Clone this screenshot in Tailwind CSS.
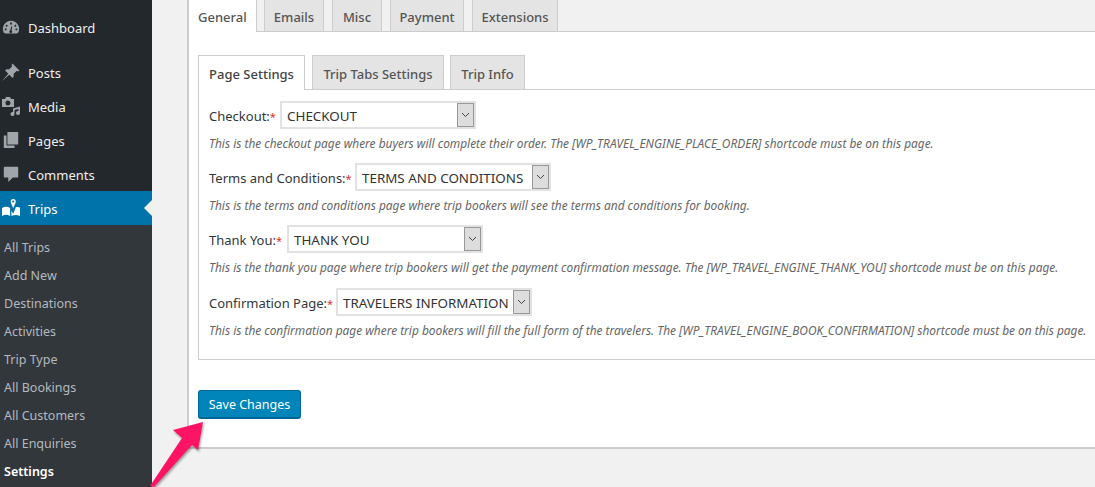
<!DOCTYPE html>
<html lang="en">
<head>
<meta charset="UTF-8">
<title>Settings</title>
<script src="https://cdn.jsdelivr.net/npm/@tailwindcss/browser@4"></script>
</head>
<body class="bg-[#f1f1f1] font-['Noto_Sans',sans-serif] text-[13px] text-[#444] overflow-hidden">
<div class="relative flex w-[1095px] h-[487px] overflow-hidden">
  <!-- Admin menu -->
  <aside class="w-[152px] shrink-0 bg-[#23282d] text-[#eee] text-[13px]">
    <div class="h-[55px] flex items-center gap-[8px] pl-[2px]">
      <svg class="w-[18px] h-[18px] text-[#a0a5aa]" viewBox="0 0 20 20" fill="currentColor"><path d="M10 2a9 9 0 0 0-8.200 12.700c.3.800 1 1.300 1.900 1.300h12.600c.9 0 1.600-.5 1.900-1.300A9 9 0 0 0 10 2zm-1 2h2v2H9zM5 6l1.500 1.500-1.300 1.300L3.800 7.400zm10 0 1.200 1.400-1.400 1.400-1.300-1.300zM3 10.500h2v2H3zm12 0h2v2h-2zm-4.500-2.500.8.300-.6 4.700a1.500 1.500 0 1 1-1.600-.2z"/></svg>
      <span class="pt-[3px]">Dashboard</span>
    </div>
    <ul>
      <li class="h-[34px] flex items-center gap-[7px] pl-[1px]">
        <svg class="w-[20px] h-[20px] text-[#a0a5aa]" viewBox="0 0 20 20" fill="currentColor"><path d="M11.500 1.500 18.500 8.500 17 9.500 15.800 8.800 12.500 12c.5 1.600.2 3-.8 4L8.300 12.700 1 19l6.300-7.300L4 8.300c1-1 2.400-1.300 4-.8l3.200-3.300-.7-1.200z"/></svg>
        <span class="pt-[4px]">Posts</span>
      </li>
      <li class="h-[34px] flex items-center gap-[7px] pl-[1px]">
        <svg class="w-[20px] h-[20px] text-[#a0a5aa]" viewBox="0 0 20 20" fill="currentColor"><path fill-rule="evenodd" d="M1 3h3l1-2h4l1 2h3v8H1zm6 1.500a2.500 2.500 0 1 0 0 5 2.500 2.500 0 0 0 0-5zM12 12.500l7-2V17a2 2 0 1 1-1.500-1.900V13l-4 1.100V18a2 2 0 1 1-1.500-1.900z"/></svg>
        <span class="pt-[4px]">Media</span>
      </li>
      <li class="h-[34px] flex items-center gap-[8px] pl-[2px]">
        <svg class="w-[18px] h-[18px] text-[#a0a5aa]" viewBox="0 0 20 20" fill="currentColor"><path d="M6 1h12v14H6zM2 5h3v11h9v3H2z"/></svg>
        <span class="pt-[4px]">Pages</span>
      </li>
      <li class="h-[34px] flex items-center gap-[8px] pl-[2px]">
        <svg class="w-[18px] h-[18px] text-[#a0a5aa]" viewBox="0 0 20 20" fill="currentColor"><path d="M3 2h14a1 1 0 0 1 1 1v10a1 1 0 0 1-1 1h-5l-5 5v-5H3a1 1 0 0 1-1-1V3a1 1 0 0 1 1-1z"/></svg>
        <span class="pt-[4px]">Comments</span>
      </li>
      <li class="relative h-[34px] flex items-center gap-[8px] pl-[2px] bg-[#0073aa] text-white">
        <svg class="w-[18px] h-[18px]" viewBox="0 0 20 20" fill="currentColor"><path d="M0 10c3-2 6-2 9 0v9c-3-2-6-2-9 0zM15.500 9c1.700-.5 3.200-.2 4.500.5V19c-3-1.500-6-1.500-9.500 0v-6l2 3.500z"/><path fill-rule="evenodd" d="M12.500 0a2.800 2.800 0 0 1 2.800 2.800c0 1.800-2.800 7.200-2.800 7.200S9.700 4.600 9.700 2.800A2.800 2.800 0 0 1 12.500 0zm0 1.600a1.200 1.200 0 1 0 0 2.400 1.200 1.200 0 0 0 0-2.400z"/></svg>
        <span class="pt-[4px]">Trips</span>
        <span class="absolute right-0 top-[9px] border-y-[8px] border-y-transparent border-r-[8px] border-r-[#f1f1f1]"></span>
      </li>
    </ul>
    <ul class="bg-[#32373c] h-[262px] pt-[9px] pl-[4px] text-[12.5px] text-[#b4b9be]">
      <li class="h-[28px] leading-[28px]">All Trips</li>
      <li class="h-[28px] leading-[28px]">Add New</li>
      <li class="h-[28px] leading-[28px]">Destinations</li>
      <li class="h-[28px] leading-[28px]">Activities</li>
      <li class="h-[28px] leading-[28px]">Trip Type</li>
      <li class="h-[28px] leading-[28px]">All Bookings</li>
      <li class="h-[28px] leading-[28px]">All Customers</li>
      <li class="h-[28px] leading-[28px]">All Enquiries</li>
      <li class="h-[28px] leading-[28px] text-white font-semibold">Settings</li>
    </ul>
  </aside>

  <!-- Settings panel -->
  <main class="flex-1 pl-[35px]">
    <div class="bg-white border-l-2 border-b-2 border-[#ccc] h-[449px]">
      <!-- Top tabs -->
      <nav class="flex gap-[8px] h-[32px] border-b border-[#ccc] bg-[#f1f1f1] text-[13px] font-medium text-[#555]">
        <a class="w-[68px] h-[32px] -mr-[1px] bg-white border-r border-[#ccc] pl-[9px] leading-[35px]">General</a>
        <a class="w-[60px] h-[31px] bg-[#e4e4e4] border-x border-[#ccc] text-center leading-[35px]">Emails</a>
        <a class="w-[50px] h-[31px] bg-[#e4e4e4] border-x border-[#ccc] text-center leading-[35px]">Misc</a>
        <a class="w-[74px] h-[31px] bg-[#e4e4e4] border-x border-[#ccc] text-center leading-[35px]">Payment</a>
        <a class="w-[86px] h-[31px] bg-[#e4e4e4] border-x border-[#ccc] text-center leading-[35px]">Extensions</a>
      </nav>

      <div class="pt-[23px] pl-[9px]">
        <!-- Sub tabs -->
        <div class="flex gap-[7px] h-[35px] border-b border-[#ccc] text-[13px] font-medium text-[#555]">
          <a class="w-[107px] h-[35px] bg-white border-t border-x border-[#ccc] text-center leading-[37px] text-[#444]">Page Settings</a>
          <a class="w-[132px] h-[34px] bg-[#e4e4e4] border-t border-x border-[#ccc] text-center leading-[36px]">Trip Tabs Settings</a>
          <a class="w-[75px] h-[34px] -ml-[1px] bg-[#e4e4e4] border-t border-x border-[#ccc] text-center leading-[36px]">Trip Info</a>
        </div>

        <div class="h-[270px] border-l border-b border-[#ccc] pl-[10px] pt-[11px]">
          <div class="flex items-center h-[28px] text-[#32373c]">
            <label class="w-[71px] pt-[4px] whitespace-nowrap">Checkout:<span class="text-[11px] text-[#e03030]">*</span></label>
            <div class="w-[196px] h-[28px] flex border-2 border-[#e2e2e2] text-[13.4px] text-[#333]">
              <span class="flex-1 pl-[5px] leading-[27px]">CHECKOUT</span>
              <span class="w-[17px] bg-[#ddd] border border-[#999] flex items-center justify-center">
                <svg class="w-[9px] h-[6px]" viewBox="0 0 9 6" fill="none" stroke="#444" stroke-width="1"><path d="M1 1l3.500 3.500L8 1"/></svg>
              </span>
            </div>
          </div>
          <p class="mt-[6px] h-[16px] leading-[16px] text-[11.9px] italic text-[#666] whitespace-nowrap">This is the checkout page where buyers will complete their order. The [WP_TRAVEL_ENGINE_PLACE_ORDER] shortcode must be on this page.</p>

          <div class="mt-[12px] flex items-center h-[28px] text-[#32373c]">
            <label class="w-[146px] pt-[4px] whitespace-nowrap">Terms and Conditions:<span class="text-[11px] text-[#e03030]">*</span></label>
            <div class="w-[196px] h-[28px] flex border-2 border-[#e2e2e2] text-[13.4px] text-[#333]">
              <span class="flex-1 pl-[5px] leading-[27px] whitespace-nowrap">TERMS AND CONDITIONS</span>
              <span class="w-[17px] bg-[#ddd] border border-[#999] flex items-center justify-center">
                <svg class="w-[9px] h-[6px]" viewBox="0 0 9 6" fill="none" stroke="#444" stroke-width="1"><path d="M1 1l3.500 3.500L8 1"/></svg>
              </span>
            </div>
          </div>
          <p class="mt-[6px] h-[16px] leading-[16px] text-[11.9px] italic text-[#666] whitespace-nowrap">This is the terms and conditions page where trip bookers will see the terms and conditions for booking.</p>

          <div class="mt-[12px] flex items-center h-[28px] text-[#32373c]">
            <label class="w-[78px] pt-[4px] whitespace-nowrap">Thank You:<span class="text-[11px] text-[#e03030]">*</span></label>
            <div class="w-[196px] h-[28px] flex border-2 border-[#e2e2e2] text-[13.4px] text-[#333]">
              <span class="flex-1 pl-[5px] leading-[27px]">THANK YOU</span>
              <span class="w-[17px] bg-[#ddd] border border-[#999] flex items-center justify-center">
                <svg class="w-[9px] h-[6px]" viewBox="0 0 9 6" fill="none" stroke="#444" stroke-width="1"><path d="M1 1l3.500 3.500L8 1"/></svg>
              </span>
            </div>
          </div>
          <p class="mt-[6px] h-[16px] leading-[16px] text-[11.9px] italic text-[#666] whitespace-nowrap">This is the thank you page where trip bookers will get the payment confirmation message. The [WP_TRAVEL_ENGINE_THANK_YOU] shortcode must be on this page.</p>

          <div class="mt-[13px] flex items-center h-[28px] text-[#32373c]">
            <label class="w-[127px] pt-[4px] whitespace-nowrap">Confirmation Page:<span class="text-[11px] text-[#e03030]">*</span></label>
            <div class="w-[196px] h-[28px] flex border-2 border-[#e2e2e2] text-[13.4px] text-[#333]">
              <span class="flex-1 pl-[5px] leading-[27px] whitespace-nowrap overflow-hidden">TRAVELERS INFORMATION</span>
              <span class="w-[17px] shrink-0 bg-[#ddd] border border-[#999] flex items-center justify-center">
                <svg class="w-[9px] h-[6px]" viewBox="0 0 9 6" fill="none" stroke="#444" stroke-width="1"><path d="M1 1l3.500 3.500L8 1"/></svg>
              </span>
            </div>
          </div>
          <p class="mt-[6px] h-[16px] leading-[16px] text-[11.9px] italic text-[#666] whitespace-nowrap">This is the confirmation page where trip bookers will fill the full form of the travelers. The [WP_TRAVEL_ENGINE_BOOK_CONFIRMATION] shortcode must be on this page.</p>
        </div>

        <button class="mt-[30px] w-[103px] h-[29px] pt-[2px] bg-[#0085ba] border border-[#006799] border-b-2 rounded-[3px] text-white text-[12.5px]">Save Changes</button>
      </div>
    </div>
  </main>

  <!-- Annotation arrow -->
  <svg class="absolute left-[145px] top-[415px] w-[70px] h-[72px] drop-shadow-[1px_2px_1px_rgba(0,0,0,0.35)]" viewBox="0 0 70 72">
    <path d="M5 71 37 23 28 15 58 7 53 35 47 30 9 72z" fill="#ff1464"/>
  </svg>
</div>
</body>
</html>
